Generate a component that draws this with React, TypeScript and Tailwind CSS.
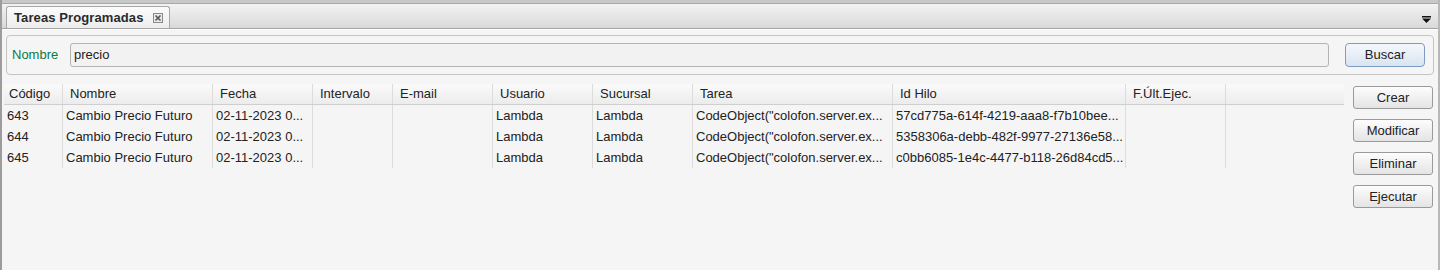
import React from "react";

const cols = [
  { name: "Código", w: 59 },
  { name: "Nombre", w: 150 },
  { name: "Fecha", w: 100 },
  { name: "Intervalo", w: 80 },
  { name: "E-mail", w: 100 },
  { name: "Usuario", w: 100 },
  { name: "Sucursal", w: 100 },
  { name: "Tarea", w: 200 },
  { name: "Id Hilo", w: 233 },
  { name: "F.Últ.Ejec.", w: 100 },
];

const rows = [
  ["643", "Cambio Precio Futuro", "02-11-2023 0...", "", "", "Lambda", "Lambda", 'CodeObject("colofon.server.ex...', "57cd775a-614f-4219-aaa8-f7b10bee...", ""],
  ["644", "Cambio Precio Futuro", "02-11-2023 0...", "", "", "Lambda", "Lambda", 'CodeObject("colofon.server.ex...', "5358306a-debb-482f-9977-27136e58...", ""],
  ["645", "Cambio Precio Futuro", "02-11-2023 0...", "", "", "Lambda", "Lambda", 'CodeObject("colofon.server.ex...', "c0bb6085-1e4c-4477-b118-26d84cd5...", ""],
];

function Btn({ label }: { label: string }) {
  return (
    <button className="w-[80px] h-[23px] rounded-[3px] border border-[#9a9a9a] bg-gradient-to-b from-[#fdfdfd] to-[#e4e4e4] text-[13px] text-[#222] leading-none">
      {label}
    </button>
  );
}

export default function App() {
  return (
    <div
      className="w-[1440px] h-[270px] bg-[#f5f5f5] text-[13px] text-[#222] flex flex-col border-l-2 border-r-2 border-l-[#9c9c9c] border-r-[#b8b8b8] overflow-hidden"
      style={{ fontFamily: '"Liberation Sans", Arial, sans-serif' }}
    >
      {/* top strip */}
      <div className="h-[4px] bg-[#c8c8c8] border-b border-[#a9a9a9] shrink-0" />
      {/* tab bar */}
      <div className="h-[25px] shrink-0 bg-gradient-to-b from-[#f3f3f3] to-[#d9d9d9] border-b border-[#a4a4a4] flex items-end pl-[4px] pr-[6px] relative">
        <div className="h-[22px] w-[164px] border border-b-0 border-[#a8a8a8] rounded-t-[3px] bg-gradient-to-b from-[#fbfbfb] to-[#ededed] flex items-center pl-[7px] pr-[6px]">
          <span className="font-bold text-[13px] text-[#2a2a2a] tracking-[0.1px]">Tareas Programadas</span>
          <span className="ml-auto w-[10px] h-[10px] border border-[#8a8a8a] flex items-center justify-center bg-[#eaeaea]">
            <svg width="8" height="8" viewBox="0 0 8 8">
              <path d="M1.5 1.5 L6.5 6.5 M6.5 1.5 L1.5 6.5" stroke="#555" strokeWidth="1.6" />
            </svg>
          </span>
        </div>
        <svg className="absolute right-[7px] top-[12px]" width="9" height="7" viewBox="0 0 9 7">
          <rect x="0" y="0" width="9" height="1.5" fill="#111" />
          <path d="M0 2.5 H9 L4.5 7 Z" fill="#111" />
        </svg>
      </div>
      <div className="h-px bg-white shrink-0" />

      <div className="flex-1 flex flex-col px-[2px] pt-[5px]">
        {/* filter panel */}
        <div className="h-[40px] mx-[2px] border border-[#c4c4c4] rounded-[4px] flex items-center pl-[5px] pr-[8px]">
          <span className="text-[#0b7a3e] w-[58px]">Nombre</span>
          <div className="flex-1 h-[24px] border border-[#b4b4b4] rounded-[3px] bg-[#f2f2f2] flex items-center px-[3px]">
            precio
          </div>
          <button className="ml-[16px] w-[80px] h-[24px] rounded-[4px] border border-[#7b9cc4] bg-gradient-to-b from-[#f4f8fc] to-[#d9e4f0] text-[13px] text-[#222]">
            Buscar
          </button>
        </div>

        <div className="flex mt-[9px]">
          {/* table */}
          <div className="w-[1340px] flex flex-col">
            <div className="flex h-[21px] bg-gradient-to-b from-[#fafafa] to-[#ececec] border-b border-[#cfcfcf]">
              {cols.map((c, i) => (
                <div
                  key={i}
                  style={{ width: c.w }}
                  className={`h-full border-r border-[#dcdcdc] flex items-center shrink-0 ${i === 0 ? "pl-[5px]" : "pl-[7px]"}`}
                >
                  {c.name}
                </div>
              ))}
              <div className="flex-1 h-full" />
            </div>
            {rows.map((r, ri) => (
              <div key={ri} className="flex h-[21px]">
                {r.map((v, ci) => (
                  <div
                    key={ci}
                    style={{ width: cols[ci].w }}
                    className="h-full border-r border-[#dcdcdc] pl-[3px] flex items-center shrink-0 whitespace-nowrap overflow-hidden"
                  >
                    {v}
                  </div>
                ))}
              </div>
            ))}
          </div>
          {/* buttons */}
          <div className="flex flex-col gap-[10px] ml-[9px] mt-[2px]">
            <Btn label="Crear" />
            <Btn label="Modificar" />
            <Btn label="Eliminar" />
            <Btn label="Ejecutar" />
          </div>
        </div>
      </div>
    </div>
  );
}
